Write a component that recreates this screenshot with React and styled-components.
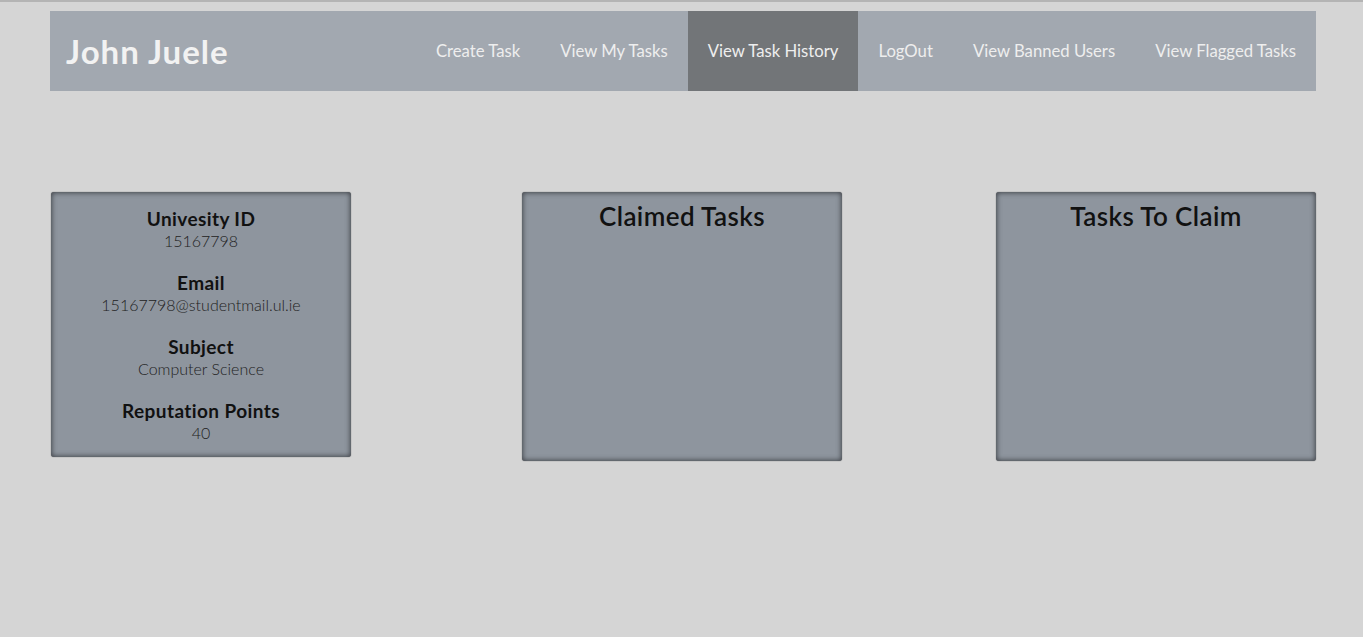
import React from "react";
import styled, { createGlobalStyle } from "styled-components";

const GlobalStyle = createGlobalStyle`
  html, body {
    margin: 0;
    padding: 0;
    background: #d5d5d5;
    font-family: Lato, "Noto Sans", sans-serif;
  }
`;

const Page = styled.div`
  min-height: 637px;
  border-top: 2px solid #b4b4b4;
  padding: 9px 47px 0 50px;
  box-sizing: border-box;
`;

const NavBar = styled.nav`
  display: flex;
  align-items: stretch;
  justify-content: space-between;
  height: 80px;
  background: #a2a8b0;
`;

const Brand = styled.div`
  display: flex;
  align-items: center;
  padding-left: 16px;
  font-size: 33px;
  letter-spacing: 1px;
  font-weight: 700;
  color: #f2f2f2;
`;

const NavLinks = styled.div`
  display: flex;
`;

const NavLink = styled.a`
  display: flex;
  align-items: center;
  padding: 0 20px;
  font-size: 16.7px;
  color: #eeeeee;
  background: ${(p) => (p.active ? "#727578" : "transparent")};
  cursor: pointer;
`;

const Dashboard = styled.div`
  display: grid;
  grid-template-columns: repeat(3, 1fr);
  margin-top: 101px;
  align-items: start;
`;

const Card = styled.section`
  justify-self: ${(p) => p.align};
  width: ${(p) => p.width}px;
  height: ${(p) => p.height}px;
  margin-left: ${(p) => (p.align === "start" ? 1 : 0)}px;
  margin-right: ${(p) => (p.align === "center" ? 2 : 0)}px;
  background: #8e959e;
  border-radius: 3px;
  box-shadow: inset 0 0 5px 1px #44484d, 0 0 1px #444;
  box-sizing: border-box;
  text-align: center;
  color: #111;
`;

const InfoList = styled.div`
  display: flex;
  flex-direction: column;
  gap: 20px;
  padding-top: 15px;
`;

const Label = styled.div`
  font-size: 19px;
  font-weight: 700;
  letter-spacing: 0.4px;
  line-height: 23px;
`;

const Value = styled.div`
  font-size: 16px;
  font-weight: 300;
  line-height: 21px;
  color: #222;
`;

const CardTitle = styled.h2`
  margin: 0;
  padding-top: 9px;
  font-size: 26px;
  font-weight: 600;
  letter-spacing: 0.4px;
  line-height: 30px;
`;

const profile = [
  ["Univesity ID", "15167798"],
  ["Email", "15167798@studentmail.ul.ie"],
  ["Subject", "Computer Science"],
  ["Reputation Points", "40"],
];

const links = [
  "Create Task",
  "View My Tasks",
  "View Task History",
  "LogOut",
  "View Banned Users",
  "View Flagged Tasks",
];

export default function App() {
  return (
    <>
      <GlobalStyle />
      <Page>
        <NavBar>
          <Brand>John Juele</Brand>
          <NavLinks>
            {links.map((l) => (
              <NavLink key={l} active={l === "View Task History"}>
                {l}
              </NavLink>
            ))}
          </NavLinks>
        </NavBar>
        <Dashboard>
          <Card align="start" width={300} height={265}>
            <InfoList>
              {profile.map(([label, value]) => (
                <div key={label}>
                  <Label>{label}</Label>
                  <Value>{value}</Value>
                </div>
              ))}
            </InfoList>
          </Card>
          <Card align="center" width={320} height={269}>
            <CardTitle>Claimed Tasks</CardTitle>
          </Card>
          <Card align="end" width={320} height={269}>
            <CardTitle>Tasks To Claim</CardTitle>
          </Card>
        </Dashboard>
      </Page>
    </>
  );
}
